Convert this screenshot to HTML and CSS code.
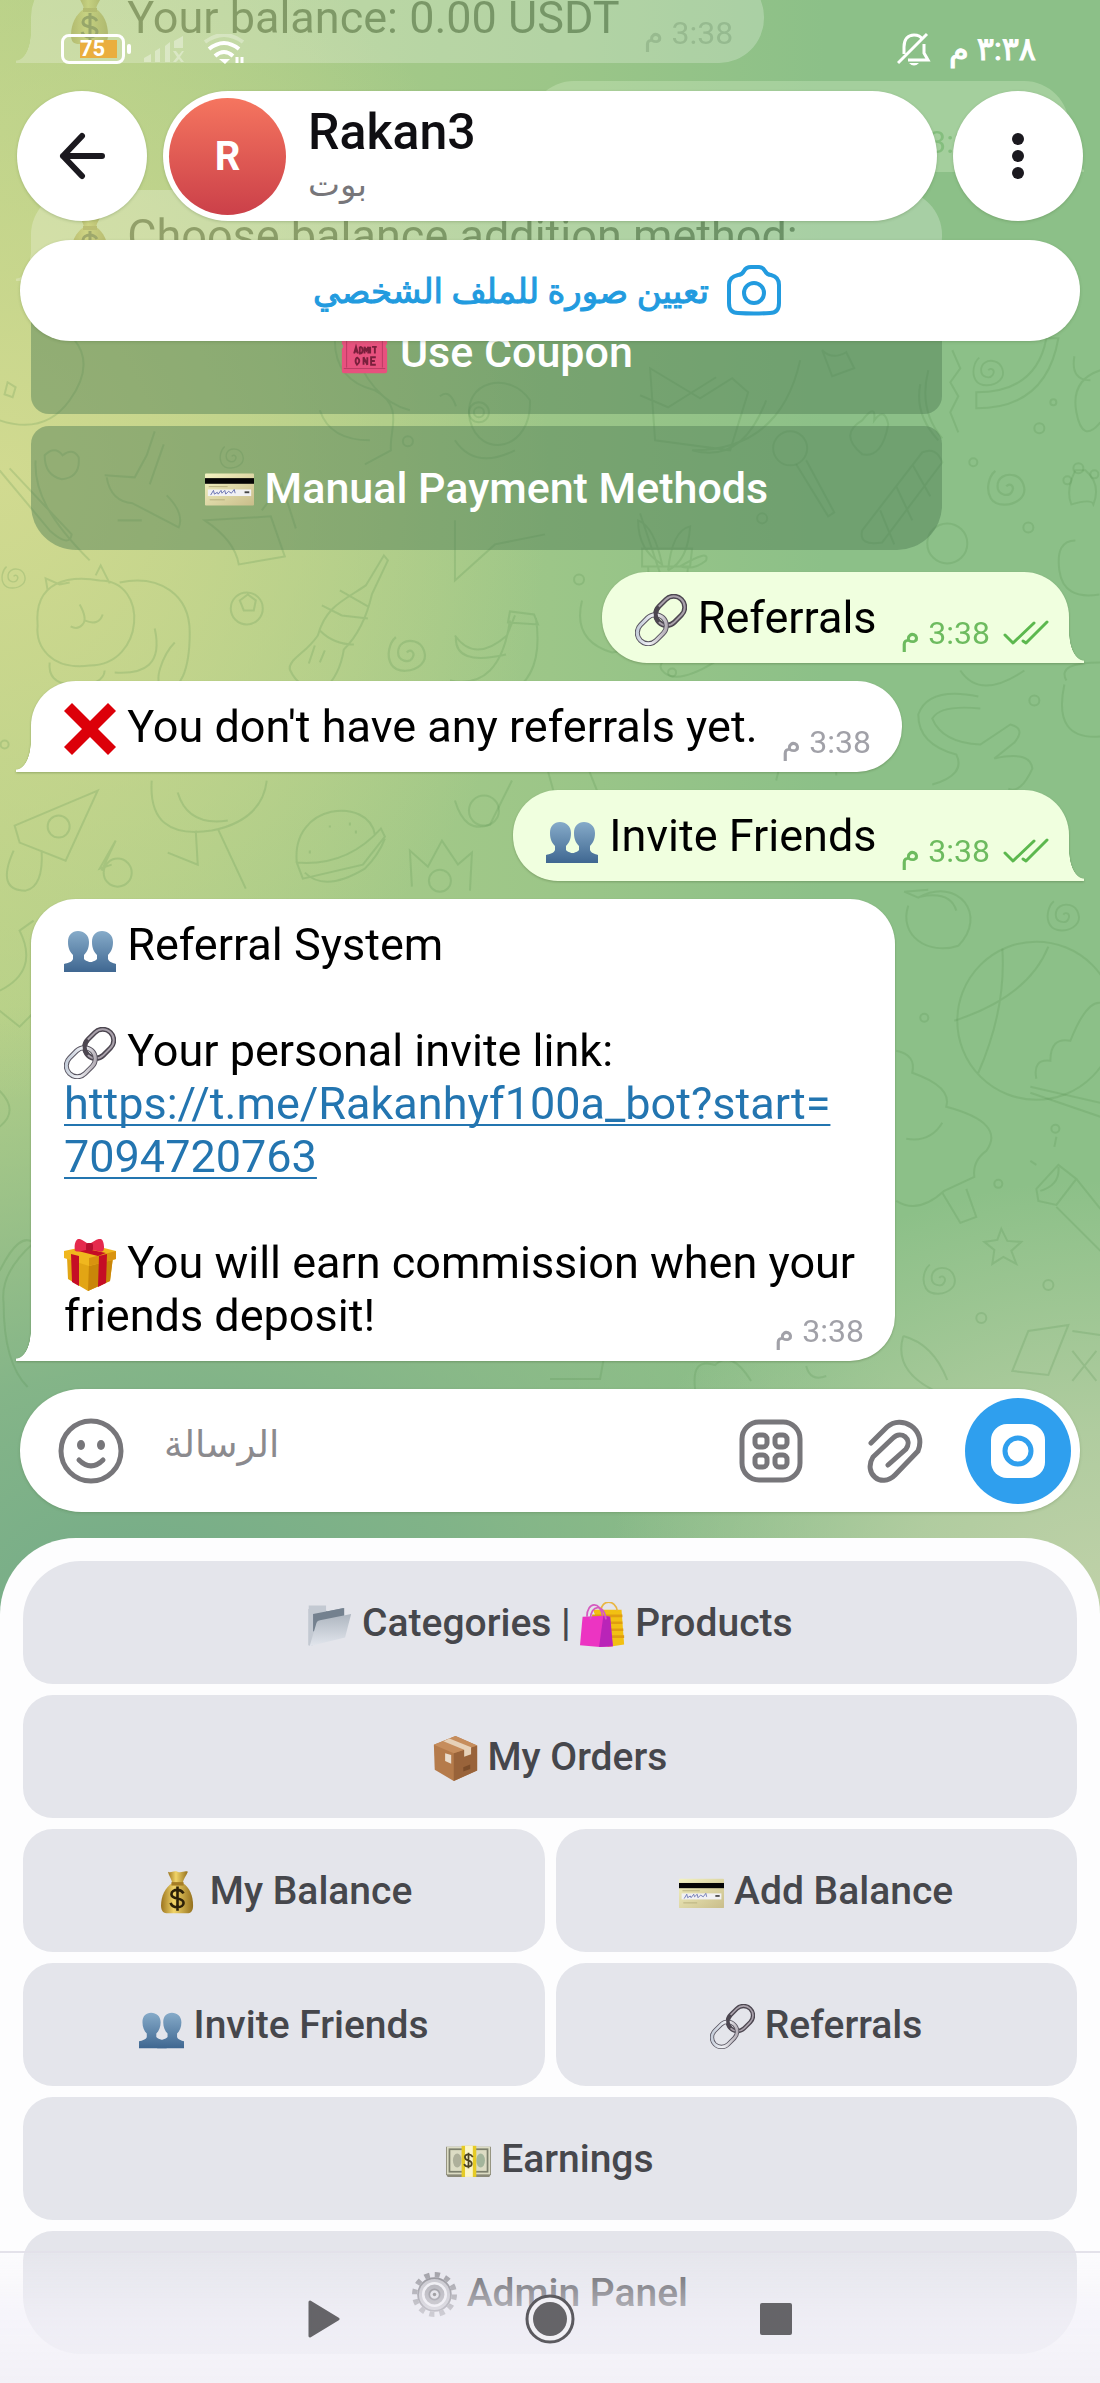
FILE: index.html
```html
<!DOCTYPE html>
<html lang="en">
<head>
<meta charset="utf-8">
<meta name="viewport" content="width=device-width, initial-scale=1">
<title>Rakan3</title>
<link rel="stylesheet" href="styles.css">
</head>
<body>

<svg class="sprite" aria-hidden="true">
  <defs>
    <linearGradient id="g-blue" x1="0" y1="0" x2="0" y2="1"><stop offset="0" stop-color="#86abc9"/><stop offset="1" stop-color="#3f6791"/></linearGradient>
    <linearGradient id="g-silver" x1="0" y1="0" x2="1" y2="1"><stop offset="0" stop-color="#b9c3d2"/><stop offset=".5" stop-color="#f1f2f6"/><stop offset="1" stop-color="#a59da6"/></linearGradient>
    <linearGradient id="g-gold" x1="0" y1="0" x2="1" y2="0"><stop offset="0" stop-color="#9c7520"/><stop offset=".4" stop-color="#f1d468"/><stop offset="1" stop-color="#94701d"/></linearGradient>
    <linearGradient id="g-folder" x1="0" y1="0" x2="0" y2="1"><stop offset="0" stop-color="#aeb6c0"/><stop offset="1" stop-color="#e2e6ed"/></linearGradient>
    <linearGradient id="g-card" x1="0" y1="0" x2="1" y2="1"><stop offset="0" stop-color="#f3f2c2"/><stop offset="1" stop-color="#c9bd8a"/></linearGradient>
  </defs>

  <symbol id="e-cross" viewBox="0 0 52 52"><path d="M8 0 26 18 44 0 52 8 34 26 52 44 44 52 26 34 8 52 0 44 18 26 0 8z" fill="#dc0009"/></symbol>

  <symbol id="e-people" viewBox="0 0 52 52">
    <path d="M52 51H21V43c4-2 10-2 12-5v-4c-3-3-5-7-5-13 0-7 4-11 10-11s11 4 11 11c0 6-2 10-5 13v4c1 3 5 4 8 5z" fill="url(#g-blue)"/>
    <path d="M0 51V43c4-1 8-2 9-5v-4c-3-3-5-7-5-13C4 14 8 10 14 10s11 4 11 11c0 6-2 10-5 13v4c2 3 8 3 12 5v8z" fill="url(#g-blue)"/>
  </symbol>

  <symbol id="e-link" viewBox="0 0 52 52">
    <g fill="none" transform="rotate(-45 26 26)">
      <rect x="23" y="15" width="32" height="22" rx="11" stroke="#4c4650" stroke-width="5"/>
      <rect x="23" y="15" width="32" height="22" rx="11" stroke="#a9a1ab" stroke-width="2"/>
      <rect x="-3" y="15" width="32" height="22" rx="11" stroke="#595561" stroke-width="5"/>
      <rect x="-3" y="15" width="32" height="22" rx="11" stroke="url(#g-silver)" stroke-width="3"/>
      <path d="M23 26c0-6 5-11 11-11" stroke="#4c4650" stroke-width="4"/>
    </g>
  </symbol>

  <symbol id="e-gift" viewBox="0 0 52 52">
    <path d="M3 18 25 25 49 18 46 42 24 52 4 40z" fill="#e2a514"/>
    <path d="M25 25 49 18 46 42 24 52z" fill="#c98609"/>
    <path d="M0 12 28 6 52 12V20L25 27 0 19z" fill="#f0b71e"/>
    <path d="M25 19 52 12V20L25 27z" fill="#d9930f"/>
    <path d="M7 15 15 17V47L8 43zM35 17 43 15 42 44 34 48zM10 11 18 9 42 14 34 17z" fill="#c50d25"/>
    <path d="M25 10C18 12 12 14 11 11S11 1 14 0s8 4 11 5c4-2 9-6 12-5s4 10 2 12-9-1-14-2z" fill="#e52a4d"/>
    <rect x="22" y="4" width="7" height="8" rx="2" fill="#b80f30"/>
  </symbol>

  <symbol id="e-moneybag" viewBox="0 0 52 52">
    <path d="M15 2c4 2 6-2 11 0s8-2 12 0c-2 5-5 8-6 13H20c-1-5-4-8-5-13z" fill="url(#g-gold)"/>
    <path d="M20 15h12c8 5 12 15 12 26 0 7-3 9-7 9H15c-5 0-8-2-8-9 0-11 5-21 13-26z" fill="url(#g-gold)"/>
    <path d="M19 14h14v4H19z" fill="#a57d25"/>
    <path d="M33 27c-2-3-5-4-7-4-4 0-7 2-7 5 0 7 14 3 14 10 0 3-3 5-7 5s-7-2-8-5M26 19v28" fill="none" stroke="#2d2108" stroke-width="3"/>
  </symbol>

  <symbol id="e-ticket" viewBox="0 0 52 52">
    <path d="M2 8h48v9c-2 1-2 4 0 5v24q0 2-2 2H4q-2 0-2-2V22c2-1 2-4 0-5z" fill="#e7517e"/>
    <path d="M7 12v30M45 12v30M4 43h44" stroke="#b93a63" fill="none"/>
    <path d="M15 27l2-7 2 7m-3-2h2M21 20v7c4 0 4-7 0-7M26 27v-7l2 4 2-4v7M32 20v7M34 20h5m-2 0v7M18 31q-3 4 0 8 5-4 0-8M25 39v-8l4 8v-8M38 31h-5v8h5m-5-4h4" stroke="#7a1f3c" stroke-width="2" fill="none"/>
  </symbol>

  <symbol id="e-card" viewBox="0 0 52 52">
    <rect y="10" width="52" height="34" rx="1" fill="url(#g-card)"/>
    <rect y="15" width="52" height="6" fill="#050505"/>
    <rect x="3" y="27" width="46" height="7" fill="#f1f1f3"/>
    <path d="M6 33l3-5 1 4 3-2 1 2 3-4 1 3 3-3 1 4 3-3 3 2 3-4 1 4" fill="none" stroke="#6570b0"/>
    <path d="M42 30h5" stroke="#444" stroke-width="2"/><path d="M4 24h20M5 38h16" stroke="#b5ad7c"/>
  </symbol>

  <symbol id="e-folder" viewBox="0 0 52 52">
    <path d="M2 8h18l3 3 19-4v26L6 50H2z" fill="#8e99a6"/>
    <path d="M2 4h20v8L6 50H2z" fill="#c3c9d2"/><path d="M7 14 43 7v14L7 34z" fill="#74818f"/>
    <path d="M11 24q1-3 4-3L51 14 44 41 3 51z" fill="url(#g-folder)"/>
  </symbol>

  <symbol id="e-bags" viewBox="0 0 52 52">
    <path d="M15 9H48L51 49 32 52z" fill="#f2c012"/><path d="M14 16h35M30 24h19M36 32h14M36 40h15" stroke="#e09d10" stroke-width="3"/>
    <path d="M24 10C25-3 41-3 43 10" fill="none" stroke="#e9b643" stroke-width="2"/>
    <path d="M3 17 30 16 34 17 38 51 23 52 0 50z" fill="#ec34c2"/><path d="M27 16l8 1 3 34-16 1z" fill="#b924b8"/>
    <path d="M8 17C8-1 24-1 26 16M12 20C12 3 28 1 30 20" fill="none" stroke="#d55abf" stroke-width="2"/>
  </symbol>

  <symbol id="e-box" viewBox="0 0 52 52">
    <path d="M1 10 26 0 51 11V40L24 52 2 39z" fill="#b57b4b"/><path d="M24 20 51 11V40L24 52z" fill="#99633a"/>
    <path d="M1 10 26 0 51 11 24 20z" fill="#c68d5c"/><path d="M12 6 19 3 44 13V21l-8 3V16z" fill="#e6d1b8"/>
    <path d="M14 20l7 2v10l-7-3z" fill="#e9dccd"/><path d="M35 36l8-3v5l-8 3z" fill="#7b4c29"/>
  </symbol>

  <symbol id="e-cash" viewBox="0 0 52 52">
    <path d="M0 10h52v32l-2 3H2l-2-3z" fill="#8b8a78"/><rect x="1" y="10" width="50" height="32" fill="#dcdcc4"/>
    <rect x="4" y="13" width="44" height="26" fill="none" stroke="#7d806d" stroke-width="2"/>
    <ellipse cx="13" cy="26" rx="5" ry="8" fill="#aeb09b"/><ellipse cx="40" cy="26" rx="5" ry="8" fill="#a3b59b"/>
    <path d="M18 9h17v36H18z" fill="#e6cb24"/><path d="M22 9h9v36h-9z" fill="#fbf5c8"/>
    <path d="M31 22q-2-3-5-3c-6 0-5 6 0 7s5 7 0 7q-4 0-5-3M26 17v18" fill="none" stroke="#4c4322" stroke-width="2"/>
  </symbol>

  <symbol id="e-gear" viewBox="0 0 52 52">
    <circle cx="26" cy="26" r="23" fill="none" stroke="#85858b" stroke-width="6" stroke-dasharray="6 6"/>
    <circle cx="26" cy="26" r="19" fill="#b8b8be" stroke="#707077" stroke-width="2"/>
    <circle cx="26" cy="26" r="13" fill="#95959b" stroke="#eeeef1" stroke-width="3"/>
    <circle cx="26" cy="26" r="6" fill="#dadade" stroke="#66666c" stroke-width="2"/><circle cx="26" cy="26" r="2" fill="#555"/>
  </symbol>

  <symbol id="i-checks" viewBox="0 0 46 26"><path d="M2 15 10 23 31 3M20 21 23 23 44 2" fill="none" stroke="#5cb84e" stroke-width="3" stroke-linecap="round" stroke-linejoin="round"/></symbol>
  <symbol id="d-spiral" viewBox="-20 -20 40 40"><path d="M0 0c3-4 8 0 5 5S-8 8-8 0-1-12 7-10s13 14 6 21-22 8-27 0-2-20 4-25" fill="none"/></symbol>
</svg>

<div class="screen">
  <header class="top">
    <div class="status">
      <div class="status-side">
        <div class="battery"><span class="battery-level">75</span></div>
        <svg width="42" height="26" viewBox="0 0 42 26" fill="#fff" fill-opacity=".35"><path d="M1 26v-4l7-4v8zM12 26V15l5-3v14zM22 26V10l5-4v20zM31 12V5l9-5v12zM30 15l3 0 3 4 3-4h2l-4 6 4 5h-3l-2-3-3 3h-3l4-5z"/></svg>
        <svg width="44" height="30" viewBox="0 0 44 30" fill="none" stroke="#fff" stroke-width="4"><path d="M2 8Q21-6 40 8" stroke-opacity=".3"/><path d="M6 15Q21 3 36 15M12 22Q21 14 30 22"/><path d="M16 25h11l-5 5z" fill="#fff" stroke="none"/><path d="M34 23v6M39 23v6" stroke-width="3"/></svg>
      </div>
      <div class="status-side">
        <svg width="34" height="34" viewBox="0 0 34 34" fill="none" stroke="#fff" stroke-width="3"><path d="M7 22V15C7 7 11 3 17 3q6 0 8 4M27 12v9l4 7H11M1 31 30 2"/><path d="M12 31h10q-5 5-10 0z" fill="#fff" stroke="none"/></svg>
        <span class="clock" lang="ar" dir="rtl">٣:٣٨ م</span>
      </div>
    </div>
    <div class="bar">
      <button class="round" type="button" aria-label="Back"><svg width="46" height="48" viewBox="0 0 46 48" fill="none" stroke="#1b191f" stroke-width="6" stroke-linecap="round" stroke-linejoin="round"><path d="M43 24H4M23 4 4 24 23 44"/></svg></button>
      <div class="peer">
        <div class="avatar">R</div>
        <div class="peer-text">
          <h1 class="peer-name">Rakan3</h1>
          <span class="peer-kind" lang="ar">بوت</span>
        </div>
      </div>
      <button class="round" type="button" aria-label="Menu"><svg width="12" height="48" viewBox="0 0 12 48" fill="#1b191f"><circle cx="6" cy="7" r="6"/><circle cx="6" cy="24" r="6"/><circle cx="6" cy="41" r="6"/></svg></button>
    </div>
    <button class="banner" type="button">
      <span lang="ar" dir="rtl">تعيين صورة للملف الشخصي</span>
      <svg width="54" height="52" viewBox="0 0 54 52" fill="none" stroke="#229bdf" stroke-width="4" stroke-linejoin="round"><path d="M11 10q4 0 6-4t7-4h8q4 0 6 4t6 4q8 2 8 10v18q0 10-9 10-16 1-32 0-9 0-9-10V20q0-8 9-10z"/><circle cx="27" cy="28" r="10"/></svg>
    </button>
  </header>

  <main class="chat">
    <svg class="wallpaper" viewBox="0 0 1100 1388" preserveAspectRatio="xMidYMin slice" fill="none" aria-hidden="true">
      <!-- left column -->
      <path d="M0 420q45 15 70-20t5-60M8 382l8 5-3 10-8-3z"/>
      <path d="M36 460C34 490 50 520 90 560M45 455q10-10 18 0 10-8 16 2 2 20-17 22-17-4-17-24zM0 470l50 60q20 18 22 4L10 468"/>
      <path d="M38 625C34 580 70 575 100 580c50 0 45 85-10 85-40 5-54-20-52-40zM48 590l-2-12 14 6 10-2M96 575l5-10 9 18M80 604q8 14 3 20t-12 2M85 620q14 6 18-6M120 582c40-8 70 12 70 50s-10 60-25 56 0-36 10-46M155 628c8 36-10 46-40 44M50 662q-2 20 20 22 34 2 35-14"/>
      <circle cx="247" cy="608" r="16"/><path d="M240 600l8-6 8 6-2 10h-10z"/>
      <path d="M384 555l-18 30c-20 14-40 20-48 50-12 18-30 24-28 34q10 22 34 20 16-14 20-40 20-20 28-55l16-34zM340 590l28 16M322 605l20 10 26 3M320 630q14 14 34 14M315 645l-6 18M325 650l-5 12"/>
      <path d="M455 635q20 28 52 0l8-20M456 636q-2 30 50 18M450 680q50 10 60-60M452 680q-6 22 40 18 54-10 44-80M508 622l30 2-4-10-24-3z"/>
      <path d="M105 475l30 2 12-22 8-24M107 477q4 24 26 26l46 24q6-14-12-32M150 484l14-40M118 520h24"/>
      <path d="M335 340q0 40 40 50c30 16 14 40 16 60l-26 14M350 340q20 60 60 70M320 410q10 30 50 30"/>
      <path d="M470 420c-8-40 40-50 60-20 2 50-50 60-60 20zM455 440q20 30 60 10M440 396q10-8 16 10"/><circle cx="479" cy="412" r="10"/><circle cx="479" cy="412" r="5"/>
      <path d="M205 520q30 20 34 44l46-8-14-40zM262 510l20-26 14 44M455 520v60l40-36 50-10"/>
      <!-- right column -->
      <path d="M650 368l50 30 32-20 16 14-18 58-75-10zM640 395l28 12 48-30M800 360q-20 90-108 90 50 14 74-50"/>
      <path d="M822 350q10 10 24 2l8 16-22 8zM862 420q14-18 12 0 10-14 14 4-6 34-26 30-24-20 0-34z"/>
      <path d="M952 350l8 18-10 14 8 14-8 16 8 20"/><path d="M976 408q70 0 82-70h-12q-10 54-70 54z"/>
      <path d="M928 370q-10 40 14 68M920 384q-6 30 18 56M862 530l60-78q14-6 20 10l-60 80q-24 4-20-12zM880 510l14 34M896 486l16 34M912 464l18 32"/>
      <circle cx="790" cy="448" r="17"/><path d="M796 464l32 52 6-4-28-52M640 513l20 60M638 520q16 6 24 44-24-14-24-44zM668 570q4-40 22-44-2 34-22 44M680 566q30-18 26-6-12 10-26 6M642 548h50l-2 18h-48zM648 566l2 36h34l4-36"/>
      <circle cx="947" cy="543" r="20"/><path d="M1090 380q-20 0-16-24M1100 370q-30 10-24 42t24 10M1075 540q-20 0-16 30t40 24M1075 470q-10 20-4 34 20-6 22 0 8-20-8-34z"/><circle cx="1067" cy="480" r="4"/><circle cx="1078" cy="468" r="5"/><circle cx="1094" cy="474" r="4"/>
      <path d="M978 696q-50-10-60 18 0 30 38 40 10 20-24 30M980 708q-40-4-48 10 10 24 48 26l30-20q16 4 4 18l-20 16q36-8 38 10-12 26-24 20"/>
      <path d="M1066 680q-10-18 34-18M1064 684q-12 56 36 52"/>
      <path d="M582 600q-10 40 30 52 40-4 50-40M960 670q20 30 64 0M585 760l12 30M776 780l10-40 50-5v40"/>
      <path d="M545 760l10 36M690 650q-40 10-26 22t50-10"/>
      <path d="M15 825 98 790 66 860 20 842zM48 826a11 11 0 1 0 22 0 11 11 0 1 0-22 0M14 850q-18 40 12 40 18-4 16-40M102 870l14-30-16 28 12-4M104 872a12 12 0 1 0 28 0 12 12 0 1 0-28 0"/>
      <path d="M152 780q-4 60 60 50 50-10 55-50M178 792q10 34 50 28M196 830l2 34-30-12M218 828l28 60"/>
      <path d="M297 862c-6-60 72-66 78-28M297 862q50 4 84-34l4 8-22 28-60 14zM305 872q20 20 60-4 14-14 20-30M310 850v3M330 825v2M350 822v3M356 830v3"/>
      <path d="M412 886l-2-36 18 16 14-26 16 24 14-12-2 38M429 880a11 11 0 1 0 22 0 11 11 0 1 0-22 0M455 800q10 34 35 24l22-44"/><circle cx="484" cy="810" r="15"/>
      <path d="M0 990q40-20 20-60l14-10M0 1010l20 16 14-14M0 1090q20 20 0 36M0 1270q20-40 34-28-34 30-30 60 0 60 24 84"/>
      <path d="M908 905c-10 30 20 50 50 40 30-30 0-70-40-48l-14-6 24-2M920 896q30-6 36 14"/>
      <circle cx="1036" cy="1020" r="79"/><path d="M1002 948q4 60-24 124M1048 946q-20 50-94 74M1036 1078q-4-20 14-18 0-24 20-20 16-40 30-38M1030 1086l70 16M1030 1092l70 24"/>
      <path d="M896 1050q20 4 16 22 40 14 34 34 60 16 40 44-14 10-12 26l-30 14q-26 24-48 10M906 1138q24 4 36-16M942 1192l18 30 16-6-10-28"/>
      <path d="M1036 1188l22-24 18 14-20 26-18-4zM1056 1206l44 44M1076 1178l24 30M1040 1190q20-6 18-24M1030 1160l6 4M1056 1136l-2 10"/>
      <path d="M1001 1228l6 12 14 1-10 9 5 13-13-7-11 7 2-14-10-8 13-2z"/>
      <path d="M903 1335q-10 34 30 54M903 1335q30 8 44 44M1012 1370l16-40 40-6-20 50zM1072 1330l28 4M1072 1350l24 30M1096 1350l-24 30"/>
      <path d="M695 1388q-4-32 20-24 16-16 36 16M550 1378h50l4-22M806 1365q4 16 20 10"/>
      <g class="dots"><circle cx="408" cy="441" r="5"/><circle cx="1053" cy="402" r="3"/><circle cx="1039" cy="428" r="5"/><circle cx="973" cy="462" r="4"/><circle cx="1028" cy="527" r="5"/><circle cx="762" cy="518" r="5"/><circle cx="579" cy="579" r="5"/><circle cx="1034" cy="700" r="5"/><circle cx="5" cy="744" r="4"/><circle cx="672" cy="672" r="4"/><circle cx="924" cy="1017" r="4"/><circle cx="1055" cy="1128" r="4"/><circle cx="998" cy="1183" r="4"/><circle cx="1048" cy="1284" r="5"/><circle cx="981" cy="1317" r="5"/></g>
      <use href="#d-spiral" x="970" y="352" width="36" height="36"/><use href="#d-spiral" x="984" y="464" width="44" height="44"/><use href="#d-spiral" x="385" y="630" width="44" height="44"/><use href="#d-spiral" x="0" y="560" width="28" height="32"/><use href="#d-spiral" x="1044" y="895" width="38" height="38"/><use href="#d-spiral" x="920" y="1258" width="38" height="38"/><use href="#d-spiral" x="218" y="442" width="28" height="28"/>
    </svg>

    <div class="messages">
      <article class="bubble in faded">
        <p><svg class="emoji"><use href="#e-moneybag"/></svg> Your balance: 0.00 USDT</p>
        <time class="meta" dir="rtl">3:38 م</time>
      </article>
      <article class="bubble out faded">
        <p><svg class="emoji"><use href="#e-card"/></svg> Add Balance</p>
        <span class="meta"><time dir="rtl">3:38 م</time><svg class="checks"><use href="#i-checks"/></svg></span>
      </article>
      <article class="with-keys">
        <div class="bubble in faded">
          <p><svg class="emoji"><use href="#e-moneybag"/></svg> Choose balance addition method:</p>
          <time class="meta" dir="rtl">3:38 م</time>
        </div>
        <div class="inline-keys">
          <button class="inline-key" type="button"><svg class="emoji"><use href="#e-ticket"/></svg> Use Coupon</button>
          <button class="inline-key" type="button"><svg class="emoji"><use href="#e-card"/></svg> Manual Payment Methods</button>
        </div>
      </article>
      <article class="bubble out">
        <p><svg class="emoji"><use href="#e-link"/></svg> Referrals</p>
        <span class="meta"><time dir="rtl">3:38 م</time><svg class="checks"><use href="#i-checks"/></svg></span>
      </article>
      <article class="bubble in">
        <p><svg class="emoji"><use href="#e-cross"/></svg> You don't have any referrals yet.</p>
        <time class="meta" dir="rtl">3:38 م</time>
      </article>
      <article class="bubble out">
        <p><svg class="emoji"><use href="#e-people"/></svg> Invite Friends</p>
        <span class="meta"><time dir="rtl">3:38 م</time><svg class="checks"><use href="#i-checks"/></svg></span>
      </article>
      <article class="bubble in long">
        <p><svg class="emoji"><use href="#e-people"/></svg> Referral System</p>
        <p><svg class="emoji"><use href="#e-link"/></svg> Your personal invite link:<br><a href="https://t.me/Rakanhyf100a_bot?start=7094720763">https://t.me/Rakanhyf100a_bot?start=<wbr>7094720763</a></p>
        <p><svg class="emoji"><use href="#e-gift"/></svg> You will earn commission when your friends deposit!<time class="meta" dir="rtl">3:38 م</time></p>
      </article>
    </div>
  </main>

  <form class="composer">
    <button class="tool" type="button" aria-label="Emoji"><svg width="66" height="66" viewBox="0 0 66 66" fill="none" stroke="#77767a" stroke-width="5" stroke-linecap="round"><circle cx="33" cy="33" r="30"/><path d="M21 42Q33 54 45 42"/><g fill="#77767a" stroke="none"><ellipse cx="23" cy="27" rx="4" ry="5"/><ellipse cx="43" cy="27" rx="4" ry="5"/></g></svg></button>
    <input class="field" type="text" lang="ar" dir="rtl" placeholder="الرسالة" aria-label="الرسالة">
    <button class="tool" type="button" aria-label="Commands"><svg width="64" height="64" viewBox="0 0 64 64" fill="none" stroke="#77767a" stroke-width="5"><rect x="3" y="3" width="58" height="58" rx="17"/><rect x="16" y="16" width="12" height="12" rx="4"/><rect x="36" y="16" width="12" height="12" rx="4"/><rect x="16" y="36" width="12" height="12" rx="4"/><rect x="36" y="36" width="12" height="12" rx="4"/></svg></button>
    <button class="tool clip" type="button" aria-label="Attach"><svg width="56" height="64" viewBox="0 0 56 64" fill="none" stroke="#77767a" stroke-width="5" stroke-linecap="round"><path d="M4 24 20 8C34-5 60 10 51 32L28 56C14 70-4 54 6 38L26 19C34 11 46 20 39 30L21 46"/></svg></button>
    <button class="camera" type="button" aria-label="Camera"><svg width="54" height="54" viewBox="0 0 54 54"><rect width="54" height="54" rx="16" fill="#fff"/><circle cx="27" cy="27" r="13" fill="none" stroke="#2f9fee" stroke-width="5"/></svg></button>
  </form>

  <section class="keyboard" aria-label="Keyboard">
    <button class="key wide" type="button"><svg class="emoji"><use href="#e-folder"/></svg> Categories | <svg class="emoji"><use href="#e-bags"/></svg> Products</button>
    <button class="key wide" type="button"><svg class="emoji"><use href="#e-box"/></svg> My Orders</button>
    <button class="key" type="button"><svg class="emoji"><use href="#e-moneybag"/></svg> My Balance</button>
    <button class="key" type="button"><svg class="emoji"><use href="#e-card"/></svg> Add Balance</button>
    <button class="key" type="button"><svg class="emoji"><use href="#e-people"/></svg> Invite Friends</button>
    <button class="key" type="button"><svg class="emoji"><use href="#e-link"/></svg> Referrals</button>
    <button class="key wide" type="button"><svg class="emoji"><use href="#e-cash"/></svg> Earnings</button>
    <button class="key wide" type="button"><svg class="emoji"><use href="#e-gear"/></svg> Admin Panel</button>
  </section>

  <nav class="system" aria-label="System">
    <button type="button" aria-label="Back"><svg width="32" height="38" viewBox="0 0 32 38"><path d="M2 2 30 19 2 36z" fill="#656468" stroke="#656468" stroke-width="3" stroke-linejoin="round"/></svg></button>
    <button type="button" aria-label="Home"><svg width="50" height="50" viewBox="0 0 50 50"><circle cx="25" cy="25" r="23" fill="#f1f0f5" stroke="#5b5a5f" stroke-width="3"/><circle cx="25" cy="25" r="17" fill="#656468"/></svg></button>
    <button type="button" aria-label="Recents"><svg width="32" height="32" viewBox="0 0 32 32"><rect width="32" height="32" rx="2" fill="#656468"/></svg></button>
  </nav>
</div>
</body>
</html>
```
FILE: styles.css
```css
* { box-sizing: border-box; }

body {
  margin: 0;
  font-family: Roboto, "DejaVu Sans", sans-serif;
  color: #000;
}

button {
  border: 0;
  margin: 0;
  padding: 0;
  background: none;
  font: inherit;
  color: inherit;
}

svg { display: block; flex: none; }

.sprite { position: absolute; width: 0; height: 0; }

.screen {
  position: relative;
  min-height: 100vh;
  display: flex;
  flex-direction: column;
  overflow: hidden;
  background:
    radial-gradient(ellipse 50% 620px at 0 480px, #d1da90 0, #cdd88ecc 30%, #cdd88e00 100%),
    radial-gradient(ellipse 45% 420px at 100% 1600px, #bfd1a8 0, #b9cfa5cc 40%, #b9cfa500 100%),
    radial-gradient(ellipse 75% 620px at 12% 1620px, #74ab88 0, #78ae88cc 40%, #78ae8800 100%),
    linear-gradient(90deg, #b5d088 0, #9cc688 50%, #8cc088 75%);
}

/* overlay bars */
.top { position: absolute; top: 0; left: 0; right: 0; z-index: 2; }

.status {
  height: 91px;
  padding: 7px 64px 0 61px;
  display: flex;
  align-items: center;
  justify-content: space-between;
}

.status-side { display: flex; align-items: center; gap: 18px; }

.battery {
  position: relative;
  width: 64px;
  height: 30px;
  padding: 3px 5px 3px 16px;
  border: 3px solid #fff;
  border-radius: 8px;
}

.battery::after {
  content: "";
  position: absolute;
  right: -9px;
  top: 7px;
  width: 4px;
  height: 10px;
  border-radius: 2px;
  background: #fff;
}

.battery-level {
  display: block;
  background: #eaae3e;
  color: #fff;
  font-size: 22px;
  font-weight: 700;
  line-height: 18px;
}

.clock {
  color: #fff;
  font-size: 32px;
  line-height: 36px;
  -webkit-text-stroke: 1px currentColor;
}

.bar { display: flex; gap: 16px; padding: 0 17px; }

.round, .peer, .banner, .composer {
  background: #fff;
  box-shadow: 0 1px 3px rgba(60, 90, 40, .25);
}

.round {
  width: 130px;
  height: 130px;
  flex: none;
  border-radius: 50%;
  display: grid;
  place-items: center;
}

.peer {
  flex: 1;
  display: flex;
  align-items: center;
  gap: 22px;
  padding-left: 6px;
  border-radius: 65px;
}

.avatar {
  width: 117px;
  height: 117px;
  border-radius: 50%;
  background: linear-gradient(#f5755f, #cb4049);
  color: #fff;
  font-size: 40px;
  font-weight: 700;
  line-height: 117px;
  text-align: center;
}

.peer-name { margin: 0; font-size: 50px; font-weight: 500; line-height: 56px; color: #0f0e12; }
.peer-kind { display: block; font-size: 34px; line-height: 48px; color: #77767a; }

.banner {
  width: calc(100% - 40px);
  height: 101px;
  margin: 19px 20px 0;
  border-radius: 51px;
  display: flex;
  align-items: center;
  justify-content: center;
  gap: 18px;
  padding-right: 6px;
  color: #229bdf;
  font-size: 34px;
  -webkit-text-stroke: 1px currentColor;
}

/* chat */
.chat { position: relative; }

.wallpaper {
  position: absolute;
  inset: 0;
  width: 100%;
  height: 100%;
  stroke: #4f8a4c;
  stroke-width: 2;
  stroke-opacity: .2;
}

.messages {
  position: relative;
  display: flex;
  flex-direction: column;
  gap: 18px;
  margin-top: -28px;
  padding: 0 31px 28px;
}

.bubble {
  position: relative;
  width: fit-content;
  display: flex;
  align-items: flex-end;
  column-gap: 24px;
  padding: 19px 31px 19px 33px;
  border-radius: 45px;
  font-size: 45px;
  line-height: 53px;
  filter: drop-shadow(0 1px 1px rgba(60, 90, 40, .35));
}

.bubble::after {
  content: "";
  position: absolute;
  bottom: 0;
  width: 15px;
  height: 30px;
}

.in { background: #fff; border-bottom-left-radius: 0; }
.in::after { left: -15px; background: radial-gradient(ellipse 15px 28px at 0 0, transparent 97%, #fff); }
.out { align-self: flex-end; background: #f0ffdf; padding-right: 20px; border-bottom-right-radius: 0; }
.out::after { right: -15px; background: radial-gradient(ellipse 15px 28px at 100% 0, transparent 97%, #f0ffdf); }

.bubble p { margin: 0; }
.long { display: block; max-width: 864px; }
.long p + p { margin-top: 53px; }
.long a { color: #2375b0; text-decoration-thickness: 2px; text-underline-offset: 5px; text-decoration-skip-ink: none; }
.long .meta { float: right; }

.faded { opacity: .24; filter: none; }

.meta {
  display: flex;
  align-items: center;
  gap: 13px;
  margin: 23px 0 -8px;
  font-size: 32px;
  line-height: 38px;
  color: #a1a1a8;
  white-space: nowrap;
}

.out .meta { color: #6dbb5f; }
.checks { width: 46px; height: 26px; }

/* negative block margins keep the picture from stretching its line */
.emoji { display: inline-block; width: 52px; height: 52px; margin: -20px 0; vertical-align: 7px; }

.with-keys { width: fit-content; margin-bottom: 4px; }
.with-keys .bubble { width: auto; }
.inline-keys { display: grid; gap: 12px; margin-top: 9px; }

.inline-key {
  height: 124px;
  border-radius: 18px;
  background: rgba(78, 124, 84, .46);
  color: #fff;
  font-size: 43px;
  font-weight: 500;
}
.inline-key:last-child { border-radius: 18px 18px 45px 45px; }
.inline-key .emoji { width: 49px; height: 49px; vertical-align: 10px; }

/* composer */
.composer {
  position: relative;
  height: 123px;
  margin: 0 20px 26px;
  padding: 0 9px 0 38px;
  display: flex;
  align-items: center;
  border-radius: 62px;
}

.field {
  flex: 1;
  min-width: 0;
  padding: 0 0 12px 40px;
  border: 0;
  outline: 0;
  background: none;
  font: 37px Roboto, "DejaVu Sans", sans-serif;
  text-align: left;
}
.field::placeholder { color: #8b8a8e; opacity: 1; }
.clip { margin: 0 42px 0 64px; }

.camera {
  width: 106px;
  height: 106px;
  border-radius: 50%;
  background: #2f9fee;
  display: grid;
  place-items: center;
}

/* reply keyboard */
.keyboard {
  flex: 1;
  display: grid;
  grid-template-columns: 1fr 1fr;
  grid-auto-rows: 123px;
  gap: 11px;
  padding: 23px 23px 30px;
  border-radius: 76px 76px 0 0;
  background: #fdfdfe;
}

.key {
  border-radius: 30px;
  background: #e4e5eb;
  color: #46474c;
  font-size: 39px;
  font-weight: 500;
}
.key.wide { grid-column: 1 / -1; }
.key:first-child { border-radius: 58px 58px 30px 30px; }
.key:last-child { border-radius: 30px 30px 58px 58px; }
.key .emoji { width: 45px; height: 45px; vertical-align: 9px; }

/* system navigation */
.system {
  position: absolute;
  left: 0;
  right: 0;
  bottom: 0;
  height: 133px;
  display: flex;
  justify-content: center;
  gap: 126px;
  border-top: 2px solid rgba(120, 120, 140, .12);
  background: linear-gradient(rgba(243, 241, 249, .1), rgba(243, 241, 249, .65) 45%, rgba(242, 240, 247, .97));
}
.system button { width: 100px; display: grid; place-items: center; }
```
